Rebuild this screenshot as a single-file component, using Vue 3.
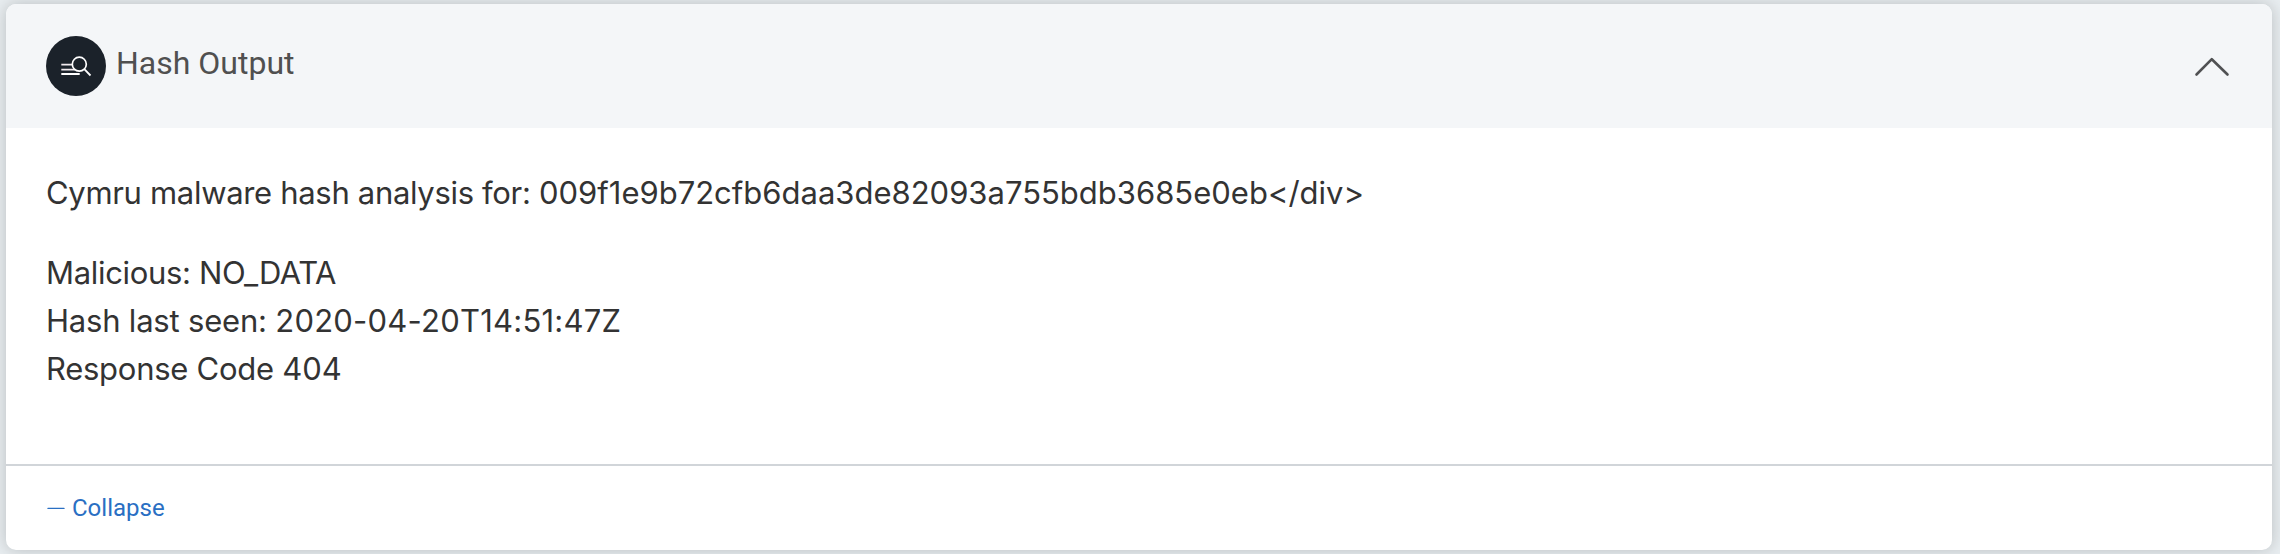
<script setup>
import { ref } from 'vue'

const expanded = ref(true)
const details = [
  { label: 'Malicious: ', value: 'NO_DATA', kind: 'verdict' },
  { label: 'Hash last seen: ', value: '2020-04-20T14:51:47Z', kind: 'date' },
  { label: 'Response Code ', value: '404', kind: 'code' },
]
</script>

<template>
  <main class="page">
    <section class="card">
      <header class="card-header">
        <svg class="badge" viewBox="0 0 60 60" aria-hidden="true">
          <circle cx="30" cy="30" r="30" fill="#1b222a" />
          <g fill="none" stroke="#fff">
            <path d="M15.3 28.6H27M15.3 33.6H29" stroke-width="1.7" stroke="#f0e9ed" />
            <path d="M15.3 38H33.7" stroke-width="2" />
            <circle cx="33.3" cy="28.2" r="7" stroke-width="1.7" fill="#1b222a" />
            <path d="M38.3 33.2L44.5 39.5" stroke-width="1.8" />
          </g>
        </svg>
        <h2 class="title">Hash Output</h2>
        <svg class="chevron" viewBox="0 0 36 20" aria-hidden="true" @click="expanded = !expanded">
          <path d="M2.5 17.5L17.8 2.2L33.5 17.5" />
        </svg>
      </header>
      <div v-if="expanded" class="card-body">
        <p class="line summary"><span class="label intro">Cymru malware hash analysis for: </span><span class="hash">009f1e9b72cfb6daa3de82093a755bdb3685e0eb&lt;/div&gt;</span></p>
        <p v-for="row in details" :key="row.kind" class="line"><span class="label" :class="row.kind + '-label'">{{ row.label }}</span><span :class="row.kind">{{ row.value }}</span></p>
      </div>
      <footer class="card-footer">
        <a class="collapse" @click="expanded = !expanded">
          <svg class="dash" viewBox="0 0 18 4" aria-hidden="true"><path d="M1 2.4H17" /></svg>Collapse
        </a>
      </footer>
    </section>
  </main>
</template>

<style>
body {
  margin: 0;
  background: #e8edf0;
}
</style>

<style scoped>
.page {
  box-sizing: border-box;
  width: 100%;
  height: 554px;
  padding: 4px 8px 4px 6px;
  overflow: hidden;
  background: #e8edf0;
}
.card {
  display: flex;
  flex-direction: column;
  height: 546px;
  border-radius: 10px;
  background: #fff;
  box-shadow: 0 0 16px rgba(0, 0, 0, 0.2);
}
.card-header {
  display: flex;
  align-items: center;
  box-sizing: border-box;
  height: 124px;
  padding: 0 42px 0 40px;
  border-radius: 10px 10px 0 0;
  background: #f4f6f8;
}
.badge {
  width: 60px;
  height: 60px;
}
.title {
  margin: 0 auto 6px 10px;
  font: 400 32px/40px Roboto, sans-serif;
  color: #505050;
}
.chevron {
  width: 36px;
  height: 20px;
  margin-top: 2px;
  fill: none;
  stroke: #505153;
  stroke-width: 2.6;
  stroke-linecap: round;
  stroke-linejoin: round;
}
.card-body {
  flex: 1;
  padding: 41px 40px 0;
  font: 400 31px/48px Inter, sans-serif;
  color: #333;
}
.line {
  margin: 0;
  white-space: pre;
}
.summary {
  margin-bottom: 32px;
}
.label {
  letter-spacing: -0.32px;
}
.date-label {
  letter-spacing: -0.2px;
}
.code-label {
  letter-spacing: -0.27px;
}
.verdict {
  letter-spacing: -0.4px;
}
.date {
  letter-spacing: 0.22px;
}
.card-footer {
  display: flex;
  align-items: center;
  box-sizing: border-box;
  height: 86px;
  padding: 0 40px;
  border-top: 2px solid #d1d5d9;
}
.collapse {
  display: flex;
  align-items: center;
  font: 400 24px/32px Roboto, sans-serif;
  color: #2a6fc3;
}
.dash {
  width: 18px;
  height: 4px;
  margin: 0 7px 0 1px;
  fill: none;
  stroke: currentColor;
  stroke-width: 1.4;
  stroke-linecap: round;
}
</style>
